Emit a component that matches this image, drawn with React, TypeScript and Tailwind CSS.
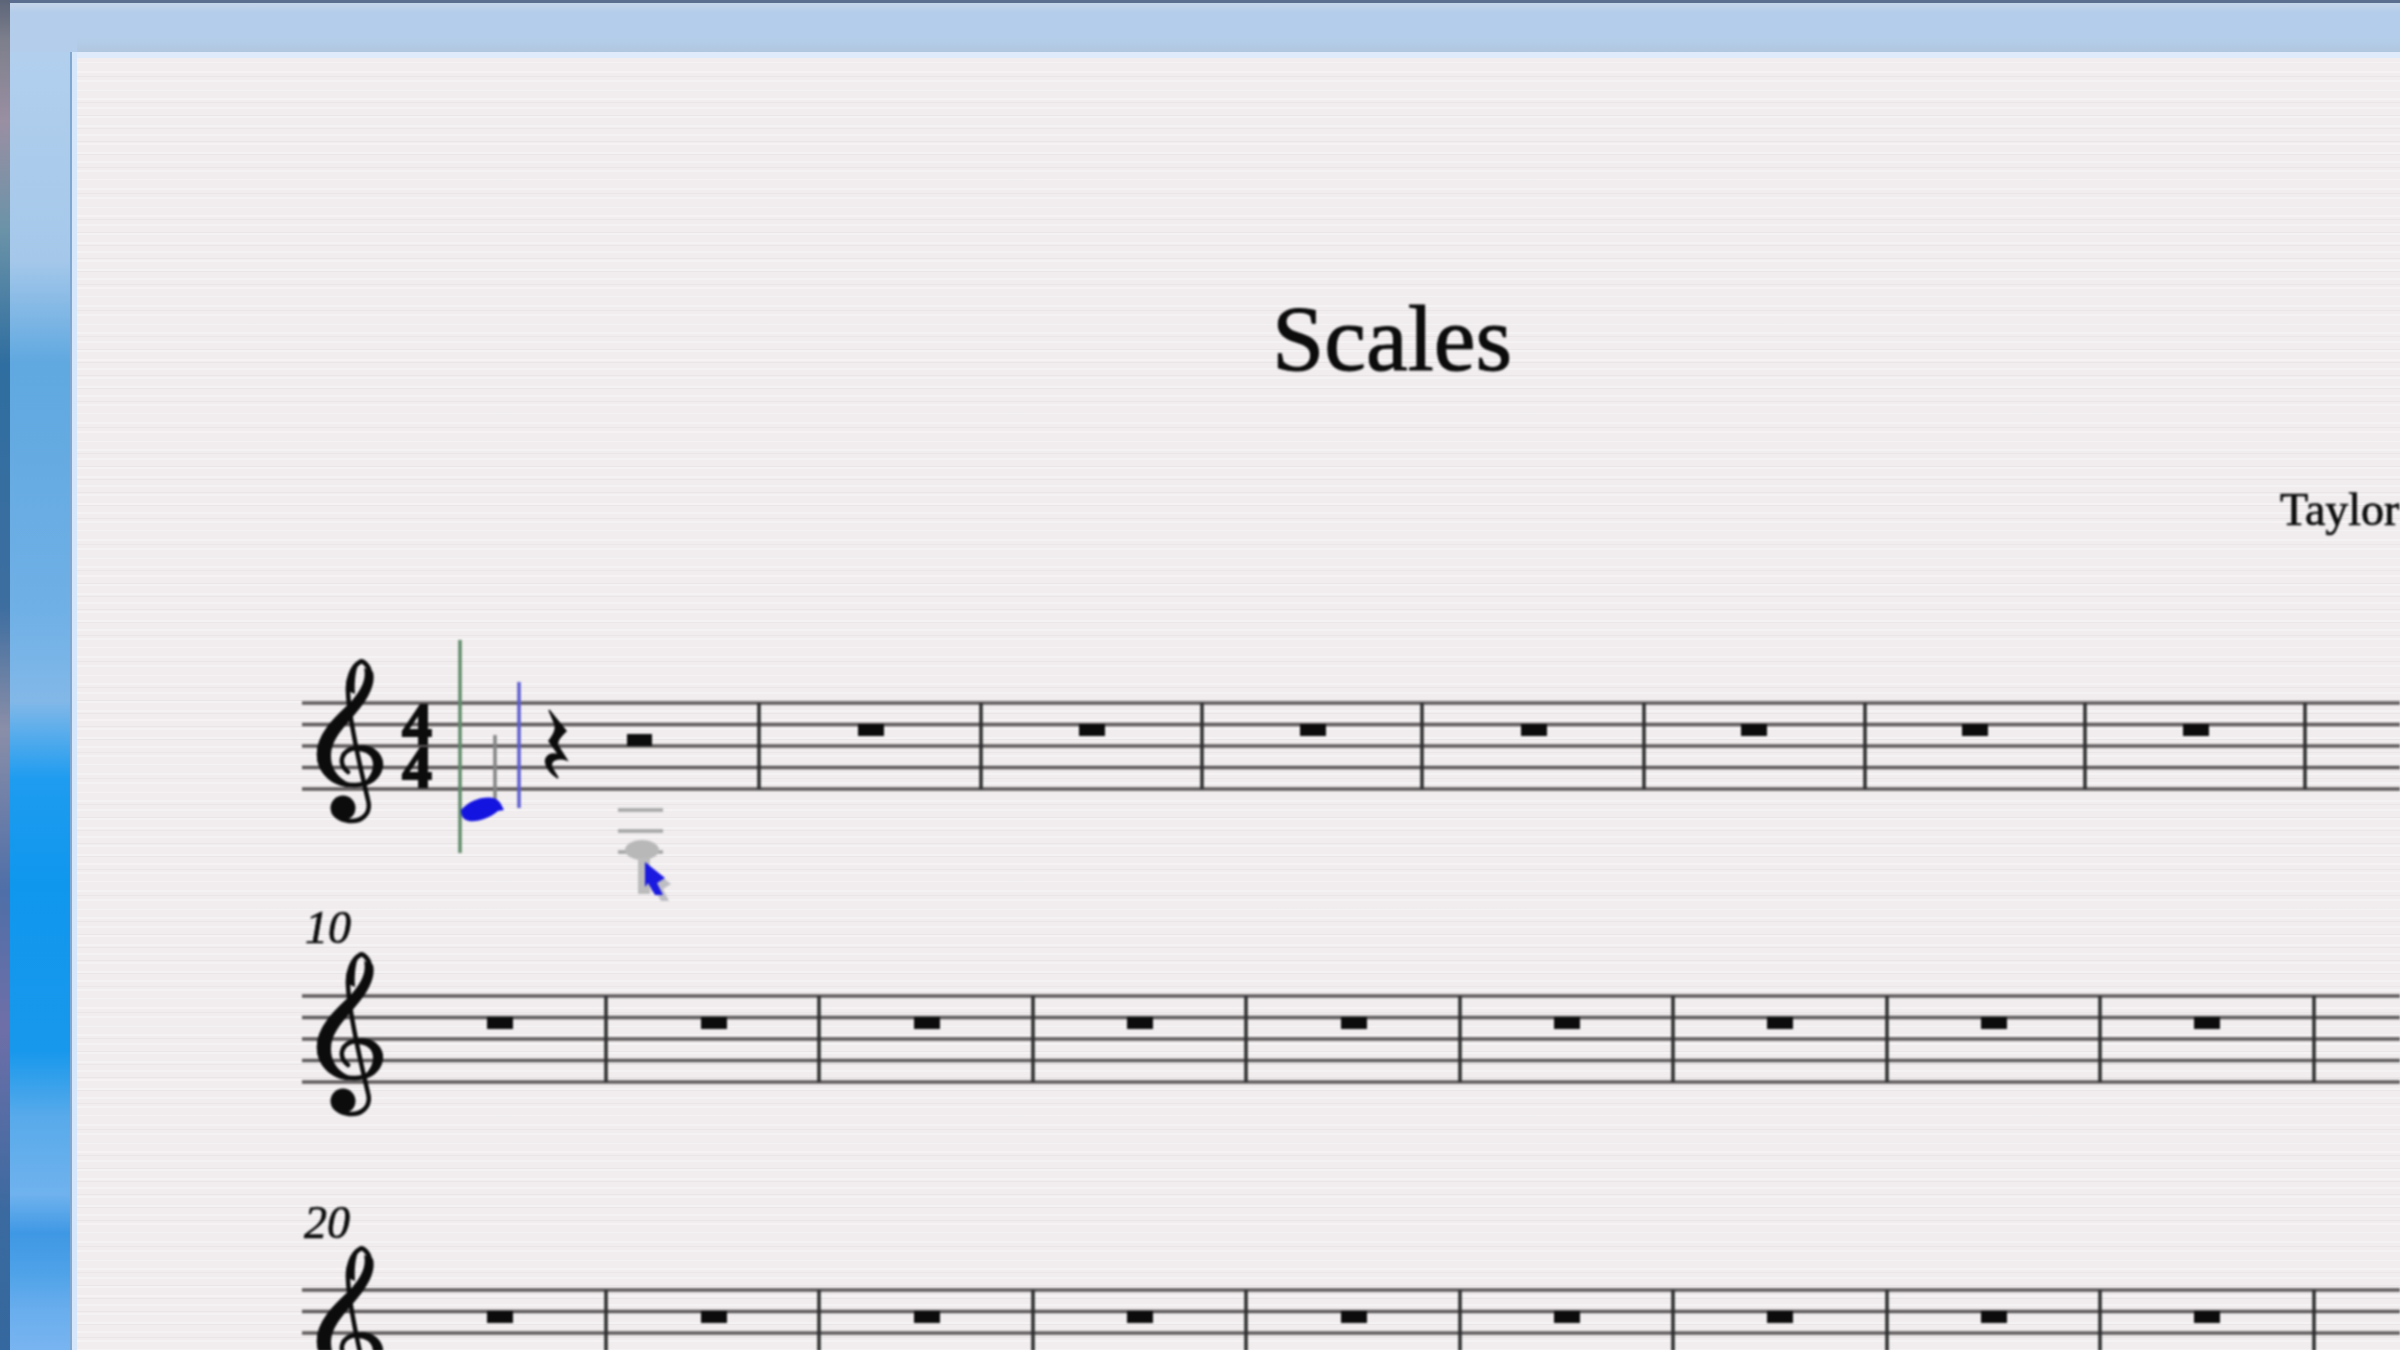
const STAFF_LINE = "#5c5859";
const BAR_LINE = "#2c2c2e";

function Clef({ dy }: { dy: number }) {
  return (
    <g transform={`translate(0 ${dy})`} fill="#0c0c0c">
      <path
        d="M348 772C338 764 340 750 356 748C372 746 382 756 380 766C378 778 368 784 356 785C334 786 319 772 319 754C319 730 345 712 358 698C368 687 372 678 370 672C368 664 362 660 360 662C352 666 347 680 348 692C349 720 362 775 368 800C372 815 360 822 349 821C340 820 334 815 334 810"
        fill="none"
        stroke="#0c0c0c"
        strokeWidth="4.5"
        strokeLinecap="round"
      />
      <path d="M360 786C334 792 315 772 317 752C319 728 344 712 354 698C364 686 366 676 364 668L373 672C376 684 368 698 360 708C346 726 331 738 331 756C331 772 342 783 360 786Z" />
      <path d="M356 746C373 742 385 755 383 767C381 779 371 786 358 787C366 782 373 774 373 765C373 756 367 751 356 751Z" />
      <path d="M346 690C346 676 352 663 360 660C356 668 354 680 355 694Z" />
      <circle cx="343" cy="808" r="12.5" />
    </g>
  );
}

function Staff({ top, bars, rests }: { top: number; bars: number[]; rests: number[] }) {
  const lines = [0, 21.5, 43, 64.5, 86];
  return (
    <>
      {lines.map((l) => (
        <line key={l} x1="302" x2="2400" y1={top + l} y2={top + l} stroke={STAFF_LINE} strokeWidth="3.5" />
      ))}
      {bars.map((x) => (
        <line key={x} x1={x} x2={x} y1={top} y2={top + 86} stroke={BAR_LINE} strokeWidth="3.5" />
      ))}
      {rests.map((x) => (
        <rect key={x} x={x - 13} y={top + 21} width="26" height="12" fill="#0c0c0c" />
      ))}
    </>
  );
}

const BARS_1 = [759, 981, 1202, 1422, 1644, 1865, 2085, 2305];
const RESTS_1 = [871, 1092, 1313, 1534, 1754, 1975, 2196];
const BARS_2 = [606, 819, 1033, 1246, 1460, 1673, 1887, 2100, 2314];
const RESTS_2 = [500, 714, 927, 1140, 1354, 1567, 1780, 1994, 2207];

export default function App() {
  return (
    <div className="flex w-[2400px] h-[1350px] overflow-hidden [font-family:'Liberation_Serif',serif] text-[#0c0c0c]">
      <div className="w-[10px] shrink-0 bg-[linear-gradient(180deg,#5c6578_0%,#7d7f8c_3%,#9a8fa3_9%,#6b93a8_17%,#2f6ea0_27%,#3e6ea0_45%,#8a8ea8_54%,#4f6fa8_66%,#6f6fa8_76%,#3a6aa0_90%,#35689e_100%)]" />
      <div className="w-[67px] shrink-0 flex flex-col">
        <div className="h-[3px] shrink-0 bg-[#5c6e90]" />
        <div className="h-[49px] shrink-0 bg-[linear-gradient(180deg,#c6d5ea_0%,#b3cdea_20%,#b3cdea_100%)]" />
        <div className="flex-1 flex">
          <div className="flex-1 bg-[linear-gradient(180deg,#b2cfee_0%,#a5c8ea_16%,#5fa8e0_24%,#6fb0e6_43%,#82b8e8_50%,#1e9cf0_56%,#0f97ee_64%,#1898ec_77%,#58aaea_82%,#6fb2ee_88%,#3f98e4_91%,#4ea2e8_94%,#6aaeee_97%,#78b4f0_100%)]" />
          <div className="w-[2px] bg-[#7fa7cf]" />
          <div className="w-[5px] bg-[#d6e6fb]" />
        </div>
      </div>
      <div className="flex-1 min-w-0 flex flex-col">
        <div className="h-[3px] shrink-0 bg-[#5c6e90]" />
        <div className="h-[49px] shrink-0 bg-[linear-gradient(180deg,#c6d5ea_0%,#b3cdea_20%,#b3cdea_72%,#b2c7df_100%)]" />
        <div className="h-[6px] shrink-0 bg-[#dfeafa]" />
        <div className="flex-1 w-[2630px] pl-[225px] bg-[#f1edee] bg-[repeating-linear-gradient(0deg,rgba(255,255,255,0.3)_0px,rgba(255,255,255,0.3)_2px,transparent_2px,transparent_9px),repeating-linear-gradient(0deg,rgba(110,95,95,0.05)_0px,rgba(110,95,95,0.05)_1px,transparent_1px,transparent_13px)]">
          <div className="blur-[1px]">
            <div className="w-[2180px] pt-[233px] text-center text-[94px] leading-[94px] [-webkit-text-stroke:1px_#000]">Scales</div>
            <div className="pl-[1978px] mt-[102px] text-[46px] leading-[46px] whitespace-nowrap [-webkit-text-stroke:0.7px_#0c0c0c]">Taylor</div>
            <svg className="block mt-[97px]" width="2098" height="275" viewBox="302 630 2098 275">
              <Staff top={703} bars={BARS_1} rests={RESTS_1} />
              <Clef dy={0} />
              <text x="402" y="744" fontSize="60" fontWeight="700" fill="#0c0c0c" stroke="#0c0c0c" strokeWidth="2" className="[font-family:'Liberation_Serif',serif]">4</text>
              <text x="402" y="787" fontSize="60" fontWeight="700" fill="#0c0c0c" stroke="#0c0c0c" strokeWidth="2" className="[font-family:'Liberation_Serif',serif]">4</text>
              <line x1="460" x2="460" y1="640" y2="853" stroke="#5f8a6a" strokeWidth="3.5" />
              <line x1="495" x2="495" y1="735" y2="800" stroke="#848484" strokeWidth="3.5" />
              <line x1="519" x2="519" y1="682" y2="808" stroke="#5c5cd0" strokeWidth="3.5" />
              <path d="M461 810C470 800 485 795 496 799C500 801 502 806 504 810L498 811C490 818 474 824 466 820C462 818 461 814 461 810Z" fill="#1414e0" />
              <path d="M549 710L566 731C560 737 556 741 558 746L567 760C558 757 549 760 552 768L558 778C548 772 543 762 547 757C550 753 556 754 559 755L549 741C555 733 557 728 554 722Z" fill="#0c0c0c" stroke="#0c0c0c" strokeWidth="1.5" />
              <rect x="627" y="734" width="25" height="12" fill="#0c0c0c" />
              <line x1="618" x2="663" y1="810" y2="810" stroke="#a4a4a4" strokeWidth="3.5" />
              <line x1="618" x2="663" y1="831" y2="831" stroke="#a4a4a4" strokeWidth="3.5" />
              <line x1="618" x2="663" y1="852" y2="852" stroke="#a4a4a4" strokeWidth="3.5" />
              <ellipse cx="642" cy="850" rx="17" ry="10" fill="#b8b8b8" />
              <rect x="638" y="858" width="12" height="36" fill="#bcbcbc" />
              <path d="M651 868L671 884L663 889L669 901L661 901L654 889L651 893Z" fill="#bdbdc4" />
              <path d="M645 862L665 878L657 883L663 895L655 895L648 883L645 887Z" fill="#1a1ae0" />
            </svg>
            <div className="pl-[3px] text-[46px] leading-[46px] italic [-webkit-text-stroke:0.7px_#0c0c0c]">10</div>
            <svg className="block" width="2098" height="249" viewBox="302 951 2098 249">
              <Staff top={996} bars={BARS_2} rests={RESTS_2} />
              <Clef dy={293} />
            </svg>
            <div className="pl-[2px] text-[46px] leading-[46px] italic [-webkit-text-stroke:0.7px_#0c0c0c]">20</div>
            <svg className="block" width="2098" height="105" viewBox="302 1246 2098 105">
              <Staff top={1290} bars={BARS_2} rests={RESTS_2} />
              <Clef dy={587} />
            </svg>
          </div>
        </div>
      </div>
    </div>
  );
}
